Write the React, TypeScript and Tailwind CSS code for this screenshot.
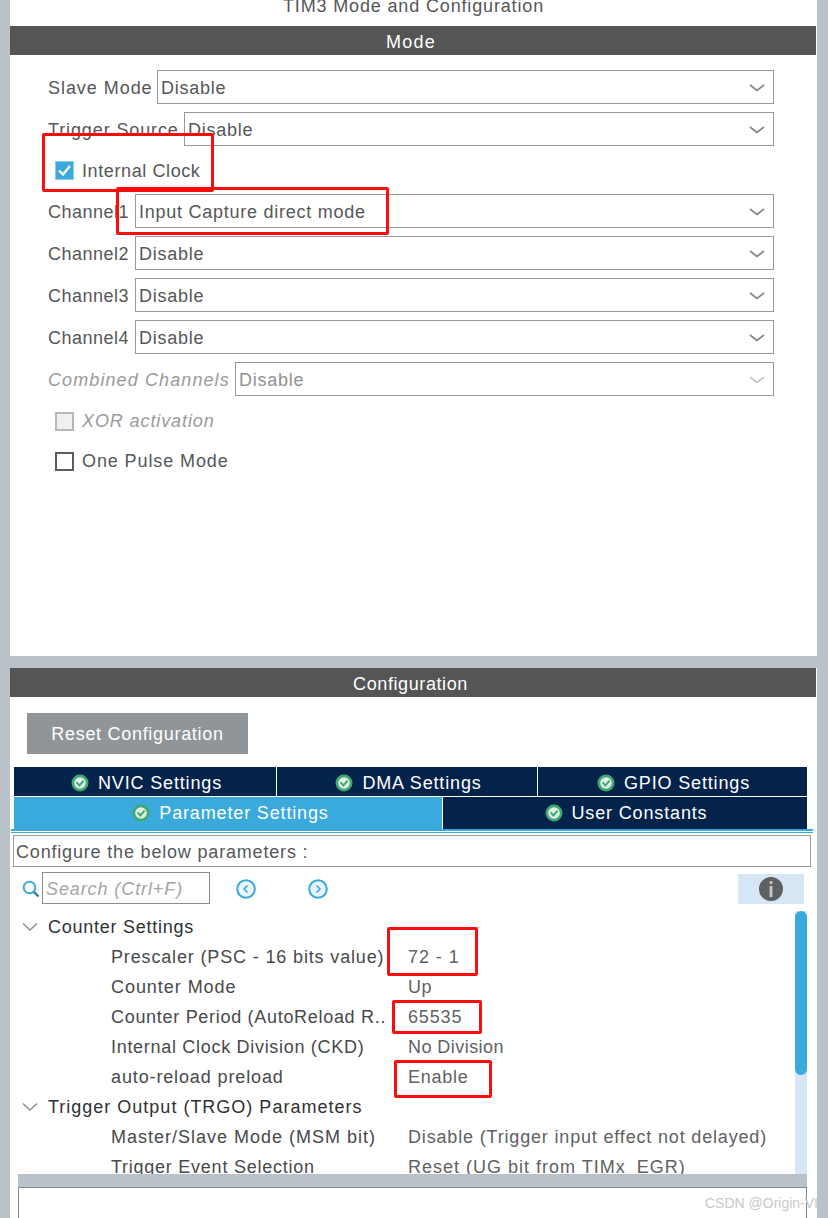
const FONT = "font-['Liberation_Sans',Arial,sans-serif]";

function Chevron({ disabled }: { disabled?: boolean }) {
  return (
    <svg width="16" height="10" viewBox="0 0 16 10" fill="none" className="mr-[8px] shrink-0">
      <path
        d="M1 2 L8 7.5 L15 2"
        stroke={disabled ? "#c4c6c8" : "#808487"}
        strokeWidth="1.6"
      />
    </svg>
  );
}

type SelectProps = {
  label: string;
  value: string;
  labelWidth: string;
  labelTracking: string;
  disabled?: boolean;
  spaced?: boolean;
};

function SelectRow({ label, value, labelWidth, labelTracking, disabled, spaced }: SelectProps) {
  return (
    <div className={`flex items-center h-[34px] pl-[38px] pr-[43px] ${spaced ? "mb-0" : "mb-[8px]"}`}>
      <div
        className={`${labelWidth} ${labelTracking} shrink-0 whitespace-nowrap pt-[2px] ${
          disabled ? "italic text-[#9a9a9a]" : "text-[#555759]"
        }`}
      >
        {label}
      </div>
      <div className="flex-1 h-[34px] flex items-center justify-between border border-[#95999c] bg-white pl-[3px] pt-[2px]">
        <span className={`tracking-[0.75px] ${disabled ? "text-[#8f9193]" : "text-[#555759]"}`}>{value}</span>
        <Chevron disabled={disabled} />
      </div>
    </div>
  );
}

function CheckRow({
  label,
  state,
  height,
  tracking,
}: {
  label: string;
  state: "checked" | "disabled" | "empty";
  height: string;
  tracking: string;
}) {
  return (
    <div className={`flex items-center ${height} pl-[45px]`}>
      {state === "checked" && (
        <div className="w-[19px] h-[19px] bg-[#3aa9dc] border border-[#8fcbe8] flex items-center justify-center">
          <svg width="15" height="13" viewBox="0 0 15 13" fill="none">
            <path d="M2 6.5 L6 10.5 L13 2" stroke="#ffffff" strokeWidth="2.4" />
          </svg>
        </div>
      )}
      {state === "disabled" && <div className="w-[19px] h-[19px] bg-[#eef0f1] border-2 border-[#b4b8bb]" />}
      {state === "empty" && <div className="w-[19px] h-[19px] bg-white border-2 border-[#5a5c5e]" />}
      <span
        className={`ml-[8px] ${tracking} ${state === "checked" ? "pt-[2px]" : ""} ${
          state === "disabled" ? "italic text-[#9a9a9a]" : "text-[#555759]"
        }`}
      >
        {label}
      </span>
    </div>
  );
}

function TabCheck() {
  return (
    <svg width="18" height="18" viewBox="0 0 18 18" fill="none" className="shrink-0">
      <circle cx="9" cy="9" r="8.5" fill="#3fa970" />
      <circle cx="9" cy="9" r="5.8" fill="#dfeee8" />
      <path d="M5.6 8.4 L8.4 11.4 L12.6 6.6" stroke="#3fa970" strokeWidth="2" />
    </svg>
  );
}

function Tab({ label, active, className }: { label: string; active?: boolean; className: string }) {
  return (
    <div
      className={`flex items-center justify-center gap-[9px] text-white tracking-[0.85px] ${
        active ? "bg-[#3aa9dc]" : "bg-[#03234b]"
      } ${className}`}
    >
      <TabCheck />
      <span>{label}</span>
    </div>
  );
}

function NavArrow({ dir }: { dir: "left" | "right" }) {
  return (
    <svg width="20" height="20" viewBox="0 0 20 20" fill="none" className="shrink-0 mt-[1px]">
      <circle cx="10" cy="10" r="8.8" stroke="#3aa9dc" strokeWidth="2" fill="#eaf5fb" />
      <path
        d={dir === "left" ? "M11.5 6.5 L8 10 L11.5 13.5" : "M8.5 6.5 L12 10 L8.5 13.5"}
        stroke="#3aa9dc"
        strokeWidth="1.6"
      />
    </svg>
  );
}

function TreeHead({ label, tracking }: { label: string; tracking: string }) {
  return (
    <div className="flex items-center h-[30px] pl-[12px] pt-[2px]">
      <svg width="16" height="10" viewBox="0 0 16 10" fill="none" className="shrink-0">
        <path d="M1 1.5 L8 8 L15 1.5" stroke="#8b8f92" strokeWidth="1.5" />
      </svg>
      <span className={`ml-[10px] text-[#2f3133] whitespace-nowrap ${tracking}`}>{label}</span>
    </div>
  );
}

const ROWS_TOP = [
  { label: "Prescaler (PSC - 16 bits value)", lt: "tracking-[0.85px]", value: "72 - 1", vt: "tracking-[0.95px]" },
  { label: "Counter Mode", lt: "tracking-[0.95px]", value: "Up", vt: "tracking-[0.45px]" },
  { label: "Counter Period (AutoReload R..", lt: "tracking-[0.7px]", value: "65535", vt: "tracking-[0.85px]" },
  { label: "Internal Clock Division (CKD)", lt: "tracking-[0.7px]", value: "No Division", vt: "tracking-[0.45px]" },
  { label: "auto-reload preload", lt: "tracking-[0.87px]", value: "Enable", vt: "tracking-[0.75px]" },
];

const ROWS_BOTTOM = [
  {
    label: "Master/Slave Mode (MSM bit)",
    lt: "tracking-[1px]",
    value: "Disable (Trigger input effect not delayed)",
    vt: "tracking-[0.83px]",
  },
  {
    label: "Trigger Event Selection",
    lt: "tracking-[0.75px]",
    value: "Reset (UG bit from TIMx_EGR)",
    vt: "tracking-[1px]",
  },
];

function TreeRow({ label, lt, value, vt }: { label: string; lt: string; value: string; vt: string }) {
  return (
    <div className="flex items-center h-[30px] pl-[101px] pt-[2px] whitespace-nowrap">
      <div className={`w-[297px] shrink-0 text-[#47494b] ${lt}`}>{label}</div>
      <div className={`text-[#5f6163] ${vt}`}>{value}</div>
    </div>
  );
}

export default function App() {
  return (
    <div className={`${FONT} relative w-[828px] h-[1218px] overflow-hidden bg-[#b8c2c8] text-[18px] leading-[22px]`}>
      <div className="ml-[10px] w-[807px] h-full flex flex-col">
        {/* mode panel */}
        <div className="h-[26px] bg-white overflow-hidden flex justify-center">
          <div className="-mt-[5px] text-[#555759] tracking-[0.85px] whitespace-nowrap">TIM3 Mode and Configuration</div>
        </div>
        <div className="bg-white">
          <div className="h-[29px] mr-px bg-[#545554] text-white flex items-center justify-center tracking-[1.2px] pr-[4px] pt-[2px]">
            Mode
          </div>
        </div>
        <div className="h-[601px] bg-white pt-[15px]">
          <SelectRow label="Slave Mode" value="Disable" labelWidth="w-[109px]" labelTracking="tracking-[0.95px]" />
          <SelectRow label="Trigger Source" value="Disable" labelWidth="w-[136px]" labelTracking="tracking-[0.88px]" spaced />
          <CheckRow label="Internal Clock" state="checked" height="h-[48px]" tracking="tracking-[0.6px]" />
          <SelectRow label="Channel1" value="Input Capture direct mode" labelWidth="w-[87px]" labelTracking="tracking-[0.5px]" />
          <SelectRow label="Channel2" value="Disable" labelWidth="w-[87px]" labelTracking="tracking-[0.5px]" />
          <SelectRow label="Channel3" value="Disable" labelWidth="w-[87px]" labelTracking="tracking-[0.5px]" />
          <SelectRow label="Channel4" value="Disable" labelWidth="w-[87px]" labelTracking="tracking-[0.5px]" />
          <SelectRow label="Combined Channels" value="Disable" labelWidth="w-[187px]" labelTracking="tracking-[1.1px]" disabled spaced />
          <div className="h-[5px]" />
          <CheckRow label="XOR activation" state="disabled" height="h-[40px]" tracking="tracking-[0.9px]" />
          <CheckRow label="One Pulse Mode" state="empty" height="h-[40px]" tracking="tracking-[0.9px]" />
        </div>
        <div className="h-[12px]" />

        {/* configuration panel */}
        <div className="flex-1 bg-white flex flex-col">
          <div className="h-[29px] mr-px shrink-0 bg-[#545554] text-white flex items-center justify-center tracking-[0.6px] pr-[5px] pt-[2px]">
            Configuration
          </div>
          <div className="ml-[17px] mt-[16px] w-[221px] h-[41px] shrink-0 bg-[#90959a] text-white flex items-center justify-center tracking-[0.7px]">
            Reset Configuration
          </div>
          <div className="ml-[4px] mt-[13px] w-[793px] shrink-0">
            <div className="flex gap-x-px h-[29px]">
              <Tab label="NVIC Settings" className="w-[262px] pt-[2px] pl-[3px]" />
              <Tab label="DMA Settings" className="w-[260px] pt-[2px] pl-[3px]" />
              <Tab label="GPIO Settings" className="flex-1 pt-[2px] pl-[2px]" />
            </div>
            <div className="flex gap-x-px h-[32px] mt-px">
              <Tab label="Parameter Settings" active className="w-[428px] pl-[5px]" />
              <Tab label="User Constants" className="flex-1 pl-[2px]" />
            </div>
          </div>
          <div className="ml-px w-[802px] h-[4px] shrink-0 border-t-2 border-b border-[#3aa9dc]" />
          <div className="ml-[3px] mt-[2px] w-[798px] h-[32px] shrink-0 border border-[#9a9c9e] flex items-center pl-[2px] pt-[2px] text-[#555759] tracking-[0.82px]">
            Configure the below parameters :
          </div>
          <div className="mt-[5px] h-[32px] shrink-0 flex items-center">
            <svg width="18" height="18" viewBox="0 0 18 18" fill="none" className="ml-[12px] mt-[1px] shrink-0">
              <circle cx="7.5" cy="7.5" r="5.8" stroke="#3aa9dc" strokeWidth="2" />
              <path d="M11.8 11.8 L16.5 16.5" stroke="#2f7fa8" strokeWidth="2.4" />
            </svg>
            <div className="ml-[2px] w-[168px] h-[32px] border border-[#8b8d8f] flex items-center pl-[3px] pt-[2px] italic text-[#a3a5a7] tracking-[0.9px] whitespace-nowrap">
              Search (Ctrl+F)
            </div>
            <div className="ml-[26px]">
              <NavArrow dir="left" />
            </div>
            <div className="ml-[52px]">
              <NavArrow dir="right" />
            </div>
            <div className="ml-[410px] mt-[2px] w-[66px] h-[30px] bg-[#d6e6f4] flex items-center justify-center">
              <svg width="24" height="24" viewBox="0 0 24 24" fill="none">
                <circle cx="12" cy="12" r="12" fill="#5e6062" />
                <rect x="10.6" y="4.2" width="2.8" height="2.8" fill="#c9ccce" />
                <rect x="10.6" y="9" width="2.8" height="11" fill="#c9ccce" />
              </svg>
            </div>
          </div>
          <div className="mt-[7px] w-[797px] h-[263px] shrink-0 flex overflow-hidden">
            <div className="flex-1 overflow-hidden">
              <TreeHead label="Counter Settings" tracking="tracking-[0.75px]" />
              {ROWS_TOP.map((r) => (
                <TreeRow key={r.label} {...r} />
              ))}
              <TreeHead label="Trigger Output (TRGO) Parameters" tracking="tracking-[1px]" />
              {ROWS_BOTTOM.map((r) => (
                <TreeRow key={r.label} {...r} />
              ))}
            </div>
            <div className="w-[12px] shrink-0 bg-[#d6e6f4]">
              <div className="w-[12px] h-[164px] rounded-full bg-[#3aa9dc]" />
            </div>
          </div>
          <div className="ml-[8px] w-[789px] h-[13px] shrink-0 bg-[#b8c2c8]" />
          <div className="ml-[8px] w-[789px] flex-1 border border-b-0 border-[#7d8894]" />
        </div>
      </div>

      {/* red annotations drawn over the screenshot */}
      <div className="absolute left-[42px] top-[133px] w-[172px] h-[59px] border-[3px] border-[#fb0d0d] rounded-[2px]" />
      <div className="absolute left-[116px] top-[187px] w-[273px] h-[48px] border-[3px] border-[#fb0d0d] rounded-[2px]" />
      <div className="absolute left-[387px] top-[927px] w-[91px] h-[49px] border-[3px] border-[#fb0d0d] rounded-[2px]" />
      <div className="absolute left-[392px] top-[1000px] w-[90px] h-[34px] border-[3px] border-[#fb0d0d] rounded-[2px]" />
      <div className="absolute left-[394px] top-[1060px] w-[98px] h-[38px] border-[3px] border-[#fb0d0d] rounded-[2px]" />

      {/* watermark */}
      <div className="absolute left-[705px] top-[1193px] w-[112px] overflow-hidden whitespace-nowrap text-[14px] leading-[20px] text-[#c8c8c8]">
        CSDN @Origin-VI
      </div>
    </div>
  );
}
